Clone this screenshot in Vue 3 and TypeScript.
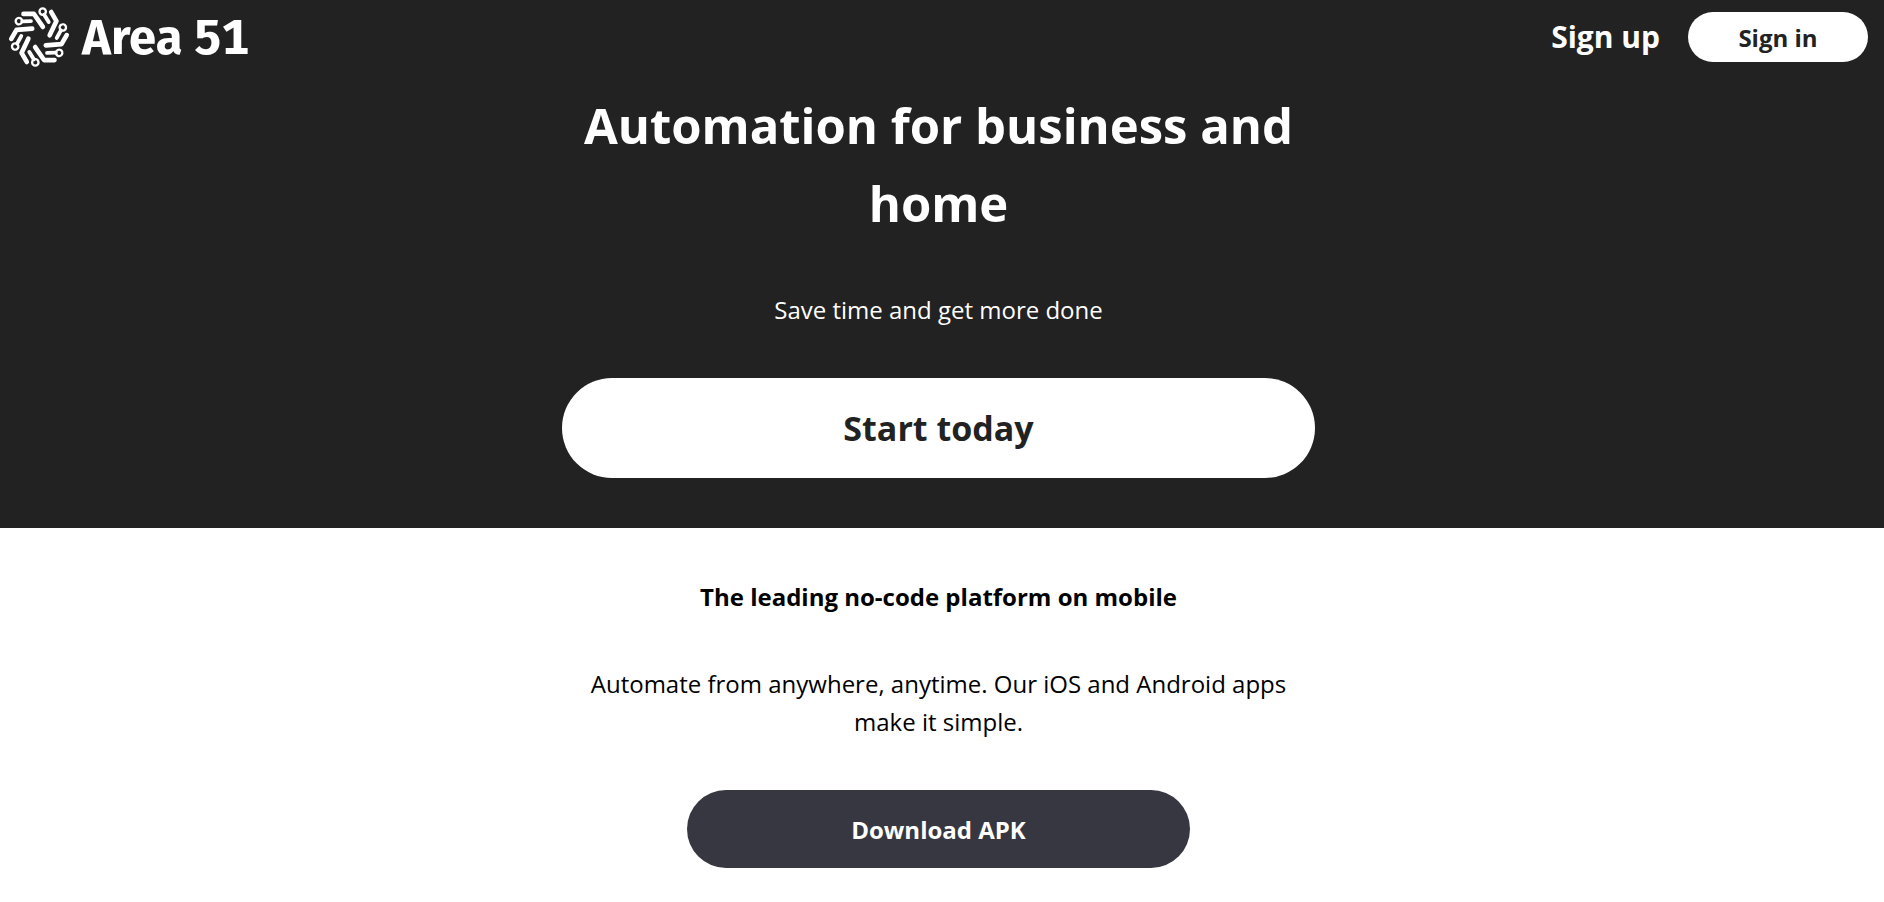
<script setup lang="ts">
const arms: number[] = [0, 60, 120, 180, 240, 300]
</script>

<template>
  <div class="page">
    <section class="top">
      <header class="bar">
        <a class="brand" href="#">
          <svg class="mark" viewBox="-32 -32 64 64" aria-hidden="true">
            <g v-for="angle in arms" :key="angle" :transform="`rotate(${angle})`">
              <circle class="ring" cx="3.8" cy="-26.2" r="3.3" />
              <path class="stem" d="M5.4 -23L10 -15.4" />
              <path class="elbow" d="M-16 -23.8H-5.2L4 -10.4" />
            </g>
          </svg>
          <span class="name">Area 51</span>
        </a>
        <nav class="actions">
          <a class="signup" href="#">Sign up</a>
          <button class="signin" type="button">Sign in</button>
        </nav>
      </header>
      <div class="column hero">
        <h1>Automation for business and home</h1>
        <p>Save time and get more done</p>
        <button class="start" type="button">Start today</button>
      </div>
    </section>
    <main class="column info">
      <h2>The leading no-code platform on mobile</h2>
      <p>Automate from anywhere, anytime. Our iOS and Android apps make it simple.</p>
      <button class="download" type="button">Download APK</button>
    </main>
  </div>
</template>

<style>
body {
  margin: 0;
  background: #fff;
}
</style>

<style scoped>
.page {
  font-family: "Segoe UI", "Open Sans", "Noto Sans", sans-serif;
  font-size: 24px;
  line-height: 38px;
  color: #000;
}
.top {
  background: #222;
  color: #fff;
}
.bar {
  display: flex;
  justify-content: space-between;
  align-items: center;
  height: 74px;
  padding: 0 16px 0 8px;
}
.brand {
  display: flex;
  align-items: center;
  gap: 12px;
  color: inherit;
  text-decoration: none;
}
.mark {
  width: 62px;
  height: 62px;
  fill: none;
  stroke: #fff;
}
.ring {
  stroke-width: 2.4;
}
.stem {
  stroke-width: 4;
  stroke-linecap: round;
}
.elbow {
  stroke-width: 4.8;
  stroke-linecap: round;
  stroke-linejoin: round;
}
.name {
  font-family: "Fira Sans", "Noto Sans", sans-serif;
  font-size: 49px;
  font-weight: 700;
  line-height: 40px;
  padding-top: 2px;
  font-variant-numeric: tabular-nums;
}
.actions {
  display: flex;
  align-items: center;
  gap: 28px;
}
.signup {
  color: inherit;
  font-size: 30px;
  font-weight: 700;
  text-decoration: none;
}
button {
  border: 0;
  border-radius: 50px;
  padding: 0;
  font-family: inherit;
  font-weight: 700;
  cursor: pointer;
}
.signin {
  width: 180px;
  height: 50px;
  background: #fff;
  color: #222;
  font-size: 24px;
}
.column {
  display: flex;
  flex-direction: column;
  align-items: center;
  width: 40vw;
  margin: 0 auto;
  text-align: center;
}
h1,
h2,
p {
  margin: 0;
}
.hero {
  padding: 12px 7px 50px 0;
}
h1 {
  font-size: 49px;
  line-height: 78px;
}
.hero p {
  margin: 49px 0;
}
.start {
  width: 100%;
  height: 100px;
  background: #fff;
  color: #222;
  font-size: 34px;
}
.info {
  padding: 50px 7px 34px 0;
}
h2 {
  font-size: 24px;
}
.info p {
  margin: 49px 0;
}
.download {
  width: 66.66%;
  height: 78px;
  background: #363740;
  color: #fff;
  font-size: 24px;
}
</style>
